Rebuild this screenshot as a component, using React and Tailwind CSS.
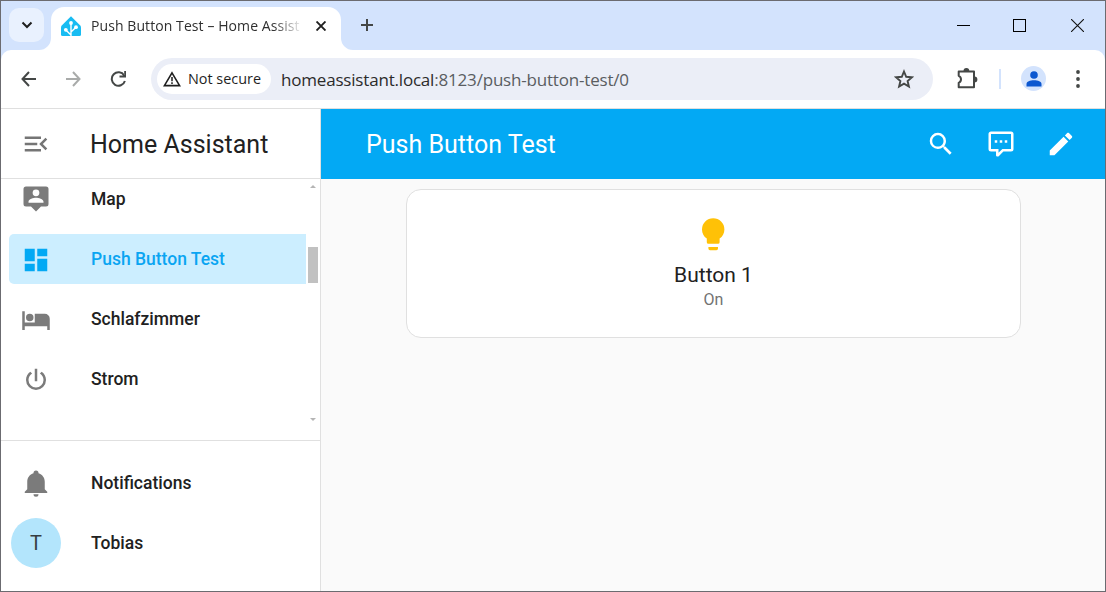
import React from "react";

const P = {
  menu: "M21,15.61L19.59,17L14.58,12L19.59,7L21,8.39L17.44,12L21,15.61M3,6H16V8H3V6M3,13V11H13V13H3M3,18V16H16V18H3Z",
  map: "M20 2H4A2 2 0 0 0 2 4V16A2 2 0 0 0 4 18H8L12 22L16 18H20A2 2 0 0 0 22 16V4A2 2 0 0 0 20 2M12 4.3A2.7 2.7 0 1 1 9.3 7 2.7 2.7 0 0 1 12 4.3M18 15H6V14.1C6 12.1 10 11 12 11S18 12.1 18 14.1Z",
  dashboard: "M13,3V9H21V3M13,21H21V11H13M3,21H11V15H3M3,13H11V3H3V13Z",
  bed: "M19,7H11V14H3V5H1V20H3V17H21V20H23V11A4,4 0 0,0 19,7M7,13A3,3 0 0,0 10,10A3,3 0 0,0 7,7A3,3 0 0,0 4,10A3,3 0 0,0 7,13Z",
  power: "M16.56,5.44L15.11,6.89C16.84,7.94 18,9.83 18,12A6,6 0 0,1 12,18A6,6 0 0,1 6,12C6,9.83 7.16,7.94 8.88,6.88L7.44,5.44C5.36,6.88 4,9.28 4,12A8,8 0 0,0 12,20A8,8 0 0,0 20,12C20,9.28 18.64,6.88 16.56,5.44M13,3H11V13H13",
  bell: "M21,19V20H3V19L5,17V11C5,7.9 7.03,5.17 10,4.29C10,4.19 10,4.1 10,4A2,2 0 0,1 12,2A2,2 0 0,1 14,4C14,4.1 14,4.19 14,4.29C16.97,5.17 19,7.9 19,11V17L21,19M14,21A2,2 0 0,1 12,23A2,2 0 0,1 10,21",
  search: "M9.5,3A6.5,6.5 0 0,1 16,9.5C16,11.11 15.41,12.59 14.44,13.73L14.71,14H15.5L20.5,19L19,20.5L14,15.5V14.71L13.73,14.44C12.59,15.41 11.11,16 9.5,16A6.5,6.5 0 0,1 3,9.5A6.5,6.5 0 0,1 9.5,3M9.5,5C7,5 5,7 5,9.5C5,12 7,14 9.5,14C12,14 14,12 14,9.5C14,7 12,5 9.5,5Z",
  pencil: "M20.71,7.04C21.1,6.65 21.1,6 20.71,5.63L18.37,3.29C18,2.9 17.35,2.9 16.96,3.29L15.12,5.12L18.87,8.87M3,17.25V21H6.75L17.81,9.93L14.06,6.18L3,17.25Z",
  chat: "M9,22A1,1 0 0,1 8,21V18H4A2,2 0 0,1 2,16V4C2,2.89 2.9,2 4,2H20A2,2 0 0,1 22,4V16A2,2 0 0,1 20,18H13.9L10.2,21.71C10,21.9 9.75,22 9.5,22V22H9M10,16V19.08L13.08,16H20V4H4V16H10M17,11H15V9H17V11M13,11H11V9H13V11M9,11H7V9H9V11Z",
  bulb: "M12,2A7,7 0 0,0 5,9C5,11.38 6.19,13.47 8,14.74V17A1,1 0 0,0 9,18H15A1,1 0 0,0 16,17V14.74C17.81,13.47 19,11.38 19,9A7,7 0 0,0 12,2M9,21A1,1 0 0,0 10,22H14A1,1 0 0,0 15,21V20H9V21Z",
};

function Icon({ d, className = "size-[30px]" }) {
  return (
    <svg viewBox="0 0 24 24" fill="currentColor" className={`block shrink-0 ${className}`}>
      <path d={d} />
    </svg>
  );
}

function NavRow({ d, label, active, iconClass = "mt-[2px]" }) {
  return (
    <div
      className={`flex h-[50px] w-[297px] shrink-0 items-center rounded-l-[5px] pl-3 ${
        active ? "bg-[#cceeff] text-[#0aa5f2]" : "text-[#212121]"
      }`}
    >
      <span className={`${iconClass} ${active ? "text-[#03a9f4]" : "text-[#7b7b7b]"}`}>
        <Icon d={d} />
      </span>
      <span className="ml-10 text-[17.5px] leading-6 font-medium">{label}</span>
    </div>
  );
}

function TabStrip() {
  return (
    <div className="flex h-[49px] shrink-0 bg-[#d3e3fd]">
      <div className="mt-[7px] ml-2 flex h-[34px] w-[35px] items-center justify-center rounded-[10px] bg-[#e9f1fe]">
        <svg viewBox="0 0 12 8" className="h-2 w-3" fill="none" stroke="#1f1f1f" strokeWidth="2">
          <path d="M1.5 1.5 6 6l4.5-4.5" />
        </svg>
      </div>
      <svg viewBox="0 0 12 12" className="mt-[37px] -ml-[5px] size-3 shrink-0" fill="#fff">
        <path d="M12 0v12H0A12 12 0 0 0 12 0Z" />
      </svg>
      <div className="mt-[6px] flex h-[43px] w-[290px] items-center rounded-t-[13px] bg-white pb-[6px] pl-[10px]">
        <svg viewBox="0 0 20 20" className="size-5 shrink-0">
          <path d="M10 0.2 19 9.2Q20 10.2 20 11.5V18.5Q20 20 18.5 20H1.5Q0 20 0 18.5V11.5Q0 10.2 1 9.2Z" fill="#18bcf2" />
          <g stroke="#fff" strokeWidth="1.4" fill="none">
            <path d="M10 20V7M10 19 4.8 14M10 16l5-4.7" />
          </g>
          <g fill="#fff">
            <circle cx="10" cy="7" r="1.9" />
            <circle cx="4.8" cy="13.8" r="1.9" />
            <circle cx="15" cy="11.2" r="1.9" />
          </g>
        </svg>
        <div className="ml-[10px] w-[210px] overflow-hidden font-['Open_Sans',sans-serif] text-[14px] leading-5 tracking-[0.08px] whitespace-nowrap text-[#2f2f2f] [mask-image:linear-gradient(to_right,black_182px,transparent_212px)]">
          Push Button Test – Home Assist
        </div>
        <svg viewBox="0 0 10 10" className="ml-[15px] size-[10px]" stroke="#1f1f1f" strokeWidth="1.9">
          <path d="M0.5 0.5 9.5 9.5M9.5 0.5 0.5 9.5" />
        </svg>
      </div>
      <svg viewBox="0 0 12 12" className="mt-[37px] size-3 shrink-0" fill="#fff">
        <path d="M0 0v12H12A12 12 0 0 1 0 0Z" />
      </svg>
      <svg viewBox="0 0 12 12" className="mt-[18px] ml-[8px] size-3" stroke="#444746" strokeWidth="2">
        <path d="M6 0V12M0 6H12" />
      </svg>
      <div className="mt-[18px] ml-auto flex gap-[43px] pr-[21px]">
        <svg viewBox="0 0 13 13" className="size-[13px]" shapeRendering="crispEdges" stroke="#000">
          <path d="M0 6.5H13" />
        </svg>
        <svg viewBox="0 0 13 13" className="size-[13px]" fill="none" shapeRendering="crispEdges" stroke="#000">
          <path d="M0.5 0.5H12.5V12.5H0.5Z" />
        </svg>
        <svg viewBox="0 0 13 13" className="ml-[2px] size-[13px]" stroke="#111" strokeWidth="1.1">
          <path d="M0 0 13 13M13 0 0 13" />
        </svg>
      </div>
    </div>
  );
}

function Toolbar() {
  return (
    <div className="flex h-[59px] shrink-0 items-center rounded-t-[10px] border-b border-[#dfdfdf] bg-white">
      <svg viewBox="0 0 16 16" className="ml-5 size-4" fill="none" stroke="#444746" strokeWidth="2">
        <path d="M15 8H2M8 1 1.5 8 8 15" />
      </svg>
      <svg viewBox="0 0 16 16" className="ml-[28px] size-4" fill="none" stroke="#a9abaa" strokeWidth="2">
        <path d="M1 8H14M8 1l6.5 7L8 15" />
      </svg>
      <svg viewBox="0 0 16 16" className="ml-[29px] size-4" fill="none" stroke="#444746" strokeWidth="2">
        <path d="M14.2 4.5A6.7 6.7 0 1 0 14.9 10M15.2 0V5.6H9.5" />
      </svg>
      <div className="ml-[25px] flex h-[42px] w-[782px] items-center rounded-full bg-[#ebeef7] pl-[6px]">
        <div className="flex h-[30px] w-[114px] items-center rounded-full bg-white pl-[6px]">
          <svg viewBox="0 0 18 16" className="h-4 w-[18px]" fill="none" stroke="#1f1f1f" strokeWidth="1.6">
            <path d="M9 1.8 16.6 14.6H1.4Z" />
            <path d="M9 6V10.3M9 11.3V13" strokeWidth="1.5" />
          </svg>
          <span className="ml-[7px] font-['Open_Sans',sans-serif] text-[14.4px] leading-5 font-medium whitespace-nowrap text-[#1f1f1f]">
            Not secure
          </span>
        </div>
        <span className="mt-px ml-[10px] font-['Open_Sans',sans-serif] text-[17px] leading-6 tracking-[-0.19px] whitespace-nowrap text-[#5a5d61]">
          <span className="text-[#2b2b2b]">homeassistant.local</span>:8123/push-button-test/0
        </span>
        <svg viewBox="0 0 20 20" className="mr-[19px] ml-auto size-5" fill="none" stroke="#444746" strokeWidth="1.9">
          <path d="m10 2.5 2.2 5.3 5.7.5-4.3 3.7 1.3 5.6-4.9-3-4.9 3 1.3-5.6L2.1 8.3l5.7-.5Z" />
        </svg>
      </div>
      <svg viewBox="0 0 22 22" className="mb-[2px] ml-[23px] size-[22px]" fill="none" stroke="#444746" strokeWidth="2">
        <path d="M2.7 4.5H18V20.3H2.7V15.8Q5 14.8 5 12.3T2.7 8.8Z" strokeLinejoin="round" />
        <path d="M7.5 4a2.9 2.9 0 0 1 5.8 0ZM18.5 9.5a2.9 2.9 0 0 1 0 5.8Z" fill="#444746" stroke="none" />
      </svg>
      <div className="ml-[21px] h-5 w-[2px] bg-[#d3e3fd]" />
      <div className="mb-px ml-5 flex size-[25px] items-center justify-center rounded-full bg-[#d3e3fd]">
        <svg viewBox="0 0 16 16" className="size-4" fill="#0b57d0">
          <circle cx="8" cy="4" r="3.8" />
          <path d="M.5 15.5V13C.5 10.5 4 9.3 8 9.3S15.5 10.5 15.5 13V15.5Z" />
        </svg>
      </div>
      <svg viewBox="0 0 4 18" className="ml-[30px] h-[18px] w-1" fill="#444746">
        <circle cx="2" cy="2" r="1.9" />
        <circle cx="2" cy="9" r="1.9" />
        <circle cx="2" cy="16" r="1.9" />
      </svg>
    </div>
  );
}

function Sidebar() {
  return (
    <aside className="flex w-[320px] shrink-0 flex-col border-r border-[#e0e0e0] bg-white">
      <div className="flex h-[70px] shrink-0 items-center border-b border-[#e0e0e0] pl-5 text-[#757575]">
        <Icon d={P.menu} />
        <h1 className="ml-[39px] pt-[2px] text-[25px] leading-8 font-normal text-[#212121]">Home Assistant</h1>
      </div>
      <div className="flex h-[262px] shrink-0 border-b border-[#e0e0e0]">
        <nav className="flex w-[305px] flex-col gap-[10px] overflow-hidden pl-2">
          <div className="-mt-[5px]">
            <NavRow d={P.map} label="Map" iconClass="" />
          </div>
          <NavRow d={P.dashboard} label="Push Button Test" active />
          <NavRow d={P.bed} label="Schlafzimmer" />
          <NavRow d={P.power} label="Strom" />
        </nav>
        <div className="flex w-[14px] flex-col items-center pt-[6px]">
          <svg viewBox="0 0 6 3" className="h-[3px] w-[6px]" fill="#b5b5b5">
            <path d="M0 3 3 0 6 3Z" />
          </svg>
          <div className="mt-[59px] h-9 w-[10px] bg-[#c1c1c1]" />
          <svg viewBox="0 0 6 3" className="mt-[135px] h-[3px] w-[6px]" fill="#b5b5b5">
            <path d="M0 0H6L3 3Z" />
          </svg>
        </div>
      </div>
      <div className="flex flex-col gap-[10px] pt-[17px] pl-2">
        <NavRow d={P.bell} label="Notifications" iconClass="" />
        <div className="flex h-[50px] items-center pl-[2px]">
          <div className="flex size-[50px] items-center justify-center rounded-full bg-[#b3e5fc] text-[20px] text-[#353c40]">
            T
          </div>
          <span className="ml-[30px] text-[17.5px] leading-6 font-medium text-[#212121]">Tobias</span>
        </div>
      </div>
    </aside>
  );
}

export default function App() {
  return (
    <div className="flex h-[592px] w-[1106px] flex-col overflow-hidden border border-[#6b6b70] bg-[#d3e3fd] font-['Roboto',sans-serif]">
      <TabStrip />
      <Toolbar />
      <div className="flex min-h-0 flex-1 bg-[#fafafa]">
        <Sidebar />
        <main className="flex flex-1 flex-col">
          <header className="flex h-[70px] shrink-0 items-center bg-[#03a9f4] pr-[29px] pl-[45px] text-white">
            <h2 className="pt-[2px] text-[25px] leading-8 font-normal">Push Button Test</h2>
            <div className="ml-auto flex gap-[30px]">
              <Icon d={P.search} />
              <Icon d={P.chat} />
              <Icon d={P.pencil} />
            </div>
          </header>
          <section className="mt-[10px] ml-[85px] flex h-[149px] w-[615px] flex-col items-center rounded-[15px] border border-[#e0e0e0] bg-white pt-[25px]">
            <Icon d={P.bulb} className="size-[38.4px] text-[#ffc107]" />
            <div className="mt-[9px] text-[21px] leading-[26px] text-[#212121]">Button 1</div>
            <div className="mt-[2px] text-[16px] leading-5 text-[#727272]">On</div>
          </section>
        </main>
      </div>
    </div>
  );
}
